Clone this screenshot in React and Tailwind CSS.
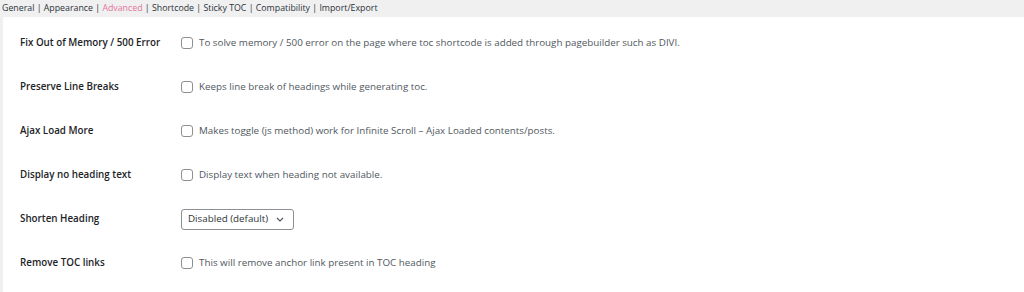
import React from "react";

const rows = [
  { label: "Fix Out of Memory / 500 Error", text: "To solve memory / 500 error on the page where toc shortcode is added through pagebuilder such as DIVI." },
  { label: "Preserve Line Breaks", text: "Keeps line break of headings while generating toc." },
  { label: "Ajax Load More", text: "Makes toggle (js method) work for Infinite Scroll \u2013 Ajax Loaded contents/posts." },
  { label: "Display no heading text", text: "Display text when heading not available." },
  { label: "Shorten Heading", select: "Disabled (default)" },
  { label: "Remove TOC links", text: "This will remove anchor link present in TOC heading" },
];

const tabs = ["General", "Appearance", "Advanced", "Shortcode", "Sticky TOC", "Compatibility", "Import/Export"];

export default function App() {
  return (
    <div className="h-[292px] w-[1024px] bg-[#f0f0f1] font-['Open_Sans','Noto_Sans',sans-serif] text-[#1d2327] overflow-hidden">
      {/* Tabs */}
      <div className="h-[17px] pl-[2px] text-[8.8px] leading-[17px] whitespace-nowrap text-[#2c3338]">
        {tabs.map((t, i) => (
          <span key={t}>
            <span className={t === "Advanced" ? "text-[#e4749a]" : ""}>{t}</span>
            {i < tabs.length - 1 && " | "}
          </span>
        ))}
      </div>

      {/* Settings panel */}
      <div className="ml-[3px] h-[275px] bg-white pt-[4px]">
        {rows.map((r) => (
          <div key={r.label} className="flex h-[44px] items-center">
            <div className="w-[178px] pl-[17px] text-[9.8px] font-semibold whitespace-nowrap text-[#1d2327]">{r.label}</div>
            {r.select ? (
              <div className="flex h-[21px] w-[113px] items-center justify-between rounded-[3px] border border-[#8c8f94] pl-[6px] pr-[9px] text-[9.8px] whitespace-nowrap text-[#2c3338]">
                <span>{r.select}</span>
                <svg width="8" height="5" viewBox="0 0 8 5" fill="none">
                  <path d="M1 1l3 3 3-3" stroke="#50575e" strokeWidth="1.2" />
                </svg>
              </div>
            ) : (
              <div className="flex items-center gap-[6px]">
                <span className="h-[12px] w-[12px] rounded-[3px] border border-[#8c8f94] bg-white" />
                <span className="text-[9.8px] whitespace-nowrap text-[#50575e]">{r.text}</span>
              </div>
            )}
          </div>
        ))}
      </div>
    </div>
  );
}
